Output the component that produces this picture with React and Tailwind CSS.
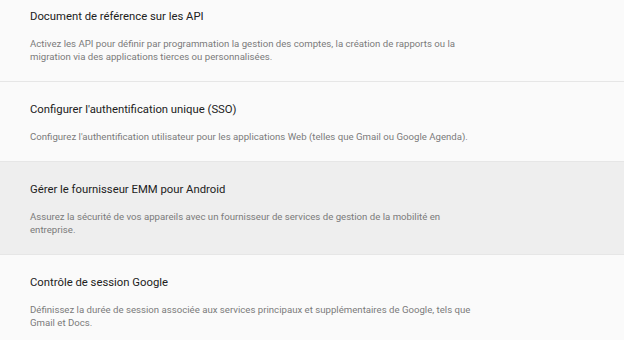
const items = [
  {
    title: "Document de référence sur les API",
    text: "Activez les API pour définir par programmation la gestion des comptes, la création de rapports ou la migration via des applications tierces ou personnalisées.",
  },
  {
    title: "Configurer l'authentification unique (SSO)",
    text: "Configurez l'authentification utilisateur pour les applications Web (telles que Gmail ou Google Agenda).",
  },
  {
    title: "Gérer le fournisseur EMM pour Android",
    text: "Assurez la sécurité de vos appareils avec un fournisseur de services de gestion de la mobilité en entreprise.",
    hover: true,
  },
  {
    title: "Contrôle de session Google",
    text: "Définissez la durée de session associée aux services principaux et supplémentaires de Google, tels que Gmail et Docs.",
  },
];

export default function App() {
  return (
    <div className="w-[624px] h-[340px] overflow-hidden bg-[#fafafa] font-['Roboto',sans-serif]">
      <div className="-mt-[11px]">
        {items.map((item, i) => (
          <div
            key={i}
            className={`px-[30px] pt-[18px] pb-[18px] border-b border-[#e6e6e6] ${item.hover ? "bg-[#eeeeee]" : ""}`}
          >
            <h3 className="text-[11.3px] leading-[20px] text-[#212121]">{item.title}</h3>
            <p className="mt-[10px] max-w-[455px] text-[9.65px] leading-[13px] text-[#7a7a7a]">{item.text}</p>
          </div>
        ))}
      </div>
    </div>
  );
}
